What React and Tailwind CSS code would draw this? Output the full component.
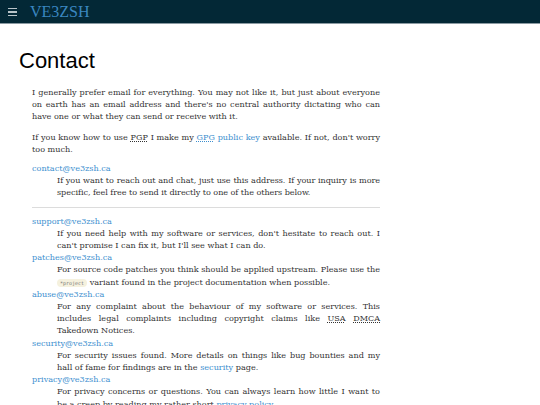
import React from 'react'

const serif = { fontFamily: '"DejaVu Serif", "Liberation Serif", serif' }

function Mail({ children }) {
  return <a href="#" className="text-[#3d8fcf]">{children}</a>
}

function Abbr({ children }) {
  return <abbr className="underline decoration-dotted underline-offset-1">{children}</abbr>
}

const entries = [
  {
    mail: 'support@ve3zsh.ca',
    body: <>If you need help with my software or services, don't hesitate to reach out. I can't promise I can fix it, but I'll see what I can do.</>
  },
  {
    mail: 'patches@ve3zsh.ca',
    body: <>For source code patches you think should be applied upstream. Please use the <code className="bg-[#f5f1de] text-[#777] text-[5px] leading-none px-[3px] py-[1px] rounded-sm" style={{ fontFamily: '"DejaVu Sans Mono", monospace' }}>*project</code> variant found in the project documentation when possible.</>
  },
  {
    mail: 'abuse@ve3zsh.ca',
    body: <>For any complaint about the behaviour of my software or services. This includes legal complaints including copyright claims like <Abbr>USA</Abbr> <Abbr>DMCA</Abbr> Takedown Notices.</>
  },
  {
    mail: 'security@ve3zsh.ca',
    body: <>For security issues found. More details on things like bug bounties and my hall of fame for findings are in the <Mail>security</Mail> page.</>
  },
  {
    mail: 'privacy@ve3zsh.ca',
    body: <>For privacy concerns or questions. You can always learn how little I want to be a creep by reading my rather short <Mail>privacy policy</Mail>.</>
  }
]

export default function App() {
  return (
    <div className="min-h-screen bg-white">
      <header className="h-[24px] bg-[#032836] border-b border-[#8a9aa2] flex items-center">
        <div className="flex flex-col gap-[2px] ml-[8px] mt-[1px]">
          <span className="block w-[9px] h-[1.5px] bg-[#b9c4c9]" />
          <span className="block w-[9px] h-[1.5px] bg-[#b9c4c9]" />
          <span className="block w-[9px] h-[1.5px] bg-[#b9c4c9]" />
        </div>
        <span className="ml-[13px] text-[#3a86c0] text-[16px] leading-none" style={{ fontFamily: '"Liberation Serif", serif' }}>VE3ZSH</span>
      </header>

      <main className="pl-[19px] pt-[26px]">
        <h1 className="text-[22px] leading-none text-black" style={{ fontFamily: '"Liberation Sans", Arial, sans-serif' }}>Contact</h1>

        <div className="ml-[13px] w-[348px] mt-[14px] text-[#333] text-[8.1px] leading-[12.2px] text-justify" style={serif}>
          <p>I generally prefer email for everything. You may not like it, but just about everyone on earth has an email address and there's no central authority dictating who can have one or what they can send or receive with it.</p>
          <p className="mt-[8px]">If you know how to use <Abbr>PGP</Abbr> I make my <a href="#" className="text-[#3d8fcf]"><Abbr>GPG</Abbr> public key</a> available. If not, don't worry too much.</p>

          <dl className="mt-[7px]">
            <dt><Mail>contact@ve3zsh.ca</Mail></dt>
            <dd className="ml-[25px] tracking-[-0.06px]">If you want to reach out and chat, just use this address. If your inquiry is more specific, feel free to send it directly to one of the others below.</dd>
          </dl>

          <hr className="border-0 border-t border-[#dcdcdc] mt-[8px] mb-[7px]" />

          <dl>
            {entries.map(e => (
              <React.Fragment key={e.mail}>
                <dt><Mail>{e.mail}</Mail></dt>
                <dd className="ml-[25px]">{e.body}</dd>
              </React.Fragment>
            ))}
          </dl>
        </div>
      </main>
    </div>
  )
}
